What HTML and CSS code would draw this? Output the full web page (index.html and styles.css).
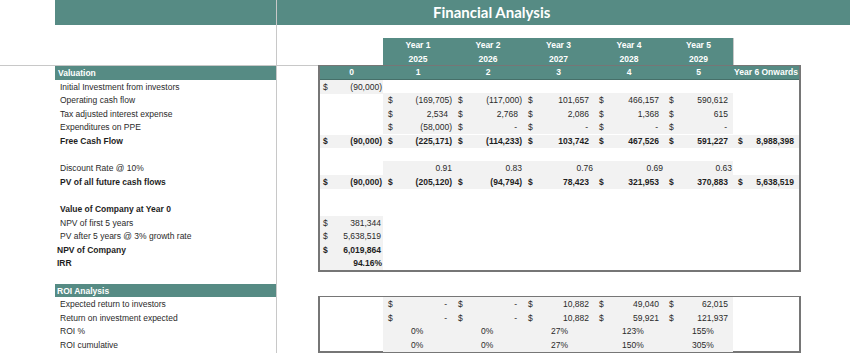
FILE: index.html
```html
<!DOCTYPE html>
<html lang="en">
<head>
<meta charset="utf-8">
<title>Financial Analysis</title>
<link rel="stylesheet" href="styles.css">
</head>
<body>
<div class="sheet">
  <div class="left">
    <div class="title-l"></div>
    <div class="head-l"></div>
    <div class="lrow band">Valuation</div>
    <div class="lrow">Initial Investment from investors</div>
    <div class="lrow">Operating cash flow</div>
    <div class="lrow">Tax adjusted interest expense</div>
    <div class="lrow">Expenditures on PPE</div>
    <div class="lrow b">Free Cash Flow</div>
    <div class="lrow"></div>
    <div class="lrow">Discount Rate @ 10%</div>
    <div class="lrow b">PV of all future cash flows</div>
    <div class="lrow"></div>
    <div class="lrow b">Value of Company at Year 0</div>
    <div class="lrow">NPV of first 5 years</div>
    <div class="lrow">PV after 5 years @ 3% growth rate</div>
    <div class="lrow b out">NPV of Company</div>
    <div class="lrow b out">IRR</div>
    <div class="lrow"></div>
    <div class="lrow band out">ROI Analysis</div>
    <div class="lrow">Expected return to investors</div>
    <div class="lrow">Return on investment expected</div>
    <div class="lrow">ROI %</div>
    <div class="lrow">ROI cumulative</div>
  </div>

  <div class="right">
    <div class="title-r">Financial Analysis</div>
    <div class="head-r">
      <div class="head-gap"></div>
      <div class="years">
        <div class="yr"><span>Year 1</span><span>2025</span></div>
        <div class="yr"><span>Year 2</span><span>2026</span></div>
        <div class="yr"><span>Year 3</span><span>2027</span></div>
        <div class="yr"><span>Year 4</span><span>2028</span></div>
        <div class="yr"><span>Year 5</span><span>2029</span></div>
      </div>
    </div>

    <div class="box">
      <div class="drow hdr">
        <div>0</div><div>1</div><div>2</div><div>3</div><div>4</div><div>5</div><div>Year 6 Onwards</div>
      </div>
      <div class="drow">
        <div class="m g neg"><span>$</span><span>(90,000)</span></div>
        <div></div><div></div><div></div><div></div><div></div><div></div>
      </div>
      <div class="drow">
        <div></div>
        <div class="m g neg"><span>$</span><span>(169,705)</span></div>
        <div class="m g neg"><span>$</span><span>(117,000)</span></div>
        <div class="m g pos"><span>$</span><span>101,657</span></div>
        <div class="m g pos"><span>$</span><span>466,157</span></div>
        <div class="m g pos"><span>$</span><span>590,612</span></div>
        <div></div>
      </div>
      <div class="drow">
        <div></div>
        <div class="m g pos"><span>$</span><span>2,534</span></div>
        <div class="m g pos"><span>$</span><span>2,768</span></div>
        <div class="m g pos"><span>$</span><span>2,086</span></div>
        <div class="m g pos"><span>$</span><span>1,368</span></div>
        <div class="m g pos"><span>$</span><span>615</span></div>
        <div></div>
      </div>
      <div class="drow">
        <div></div>
        <div class="m g neg"><span>$</span><span>(58,000)</span></div>
        <div class="m g dash"><span>$</span><span>-</span></div>
        <div class="m g dash"><span>$</span><span>-</span></div>
        <div class="m g dash"><span>$</span><span>-</span></div>
        <div class="m g dash"><span>$</span><span>-</span></div>
        <div></div>
      </div>
      <div class="drow bold sep">
        <div class="m g neg"><span>$</span><span>(90,000)</span></div>
        <div class="m g neg"><span>$</span><span>(225,171)</span></div>
        <div class="m g neg"><span>$</span><span>(114,233)</span></div>
        <div class="m g pos"><span>$</span><span>103,742</span></div>
        <div class="m g pos"><span>$</span><span>467,526</span></div>
        <div class="m g pos"><span>$</span><span>591,227</span></div>
        <div class="m g pos"><span>$</span><span>8,988,398</span></div>
      </div>
      <div class="drow"></div>
      <div class="drow">
        <div></div>
        <div class="r g">0.91</div>
        <div class="r g">0.83</div>
        <div class="r g">0.76</div>
        <div class="r g">0.69</div>
        <div class="r g">0.63</div>
        <div></div>
      </div>
      <div class="drow bold">
        <div class="m g neg"><span>$</span><span>(90,000)</span></div>
        <div class="m g neg"><span>$</span><span>(205,120)</span></div>
        <div class="m g neg"><span>$</span><span>(94,794)</span></div>
        <div class="m g pos"><span>$</span><span>78,423</span></div>
        <div class="m g pos"><span>$</span><span>321,953</span></div>
        <div class="m g pos"><span>$</span><span>370,883</span></div>
        <div class="m g pos"><span>$</span><span>5,638,519</span></div>
      </div>
      <div class="drow"></div>
      <div class="drow"></div>
      <div class="drow">
        <div class="m g pos"><span>$</span><span>381,344</span></div>
      </div>
      <div class="drow">
        <div class="m g pos"><span>$</span><span>5,638,519</span></div>
      </div>
      <div class="drow bold">
        <div class="m g pos"><span>$</span><span>6,019,864</span></div>
      </div>
      <div class="drow bold">
        <div class="r g">94.16%</div>
      </div>
    </div>

    <div class="spacer"></div>

    <div class="box roi">
      <div class="drow">
        <div></div>
        <div class="m g dash"><span>$</span><span>-</span></div>
        <div class="m g dash"><span>$</span><span>-</span></div>
        <div class="m g pos"><span>$</span><span>10,882</span></div>
        <div class="m g pos"><span>$</span><span>49,040</span></div>
        <div class="m g pos"><span>$</span><span>62,015</span></div>
        <div></div>
      </div>
      <div class="drow">
        <div></div>
        <div class="m g dash"><span>$</span><span>-</span></div>
        <div class="m g dash"><span>$</span><span>-</span></div>
        <div class="m g pos"><span>$</span><span>10,882</span></div>
        <div class="m g pos"><span>$</span><span>59,921</span></div>
        <div class="m g pos"><span>$</span><span>121,937</span></div>
        <div></div>
      </div>
      <div class="drow">
        <div></div>
        <div class="p g">0%</div>
        <div class="p g">0%</div>
        <div class="p g">27%</div>
        <div class="p g">123%</div>
        <div class="p g">155%</div>
        <div></div>
      </div>
      <div class="drow">
        <div></div>
        <div class="p g">0%</div>
        <div class="p g">0%</div>
        <div class="p g">27%</div>
        <div class="p g">150%</div>
        <div class="p g">305%</div>
        <div></div>
      </div>
    </div>
  </div>
</div>
</body>
</html>
```
FILE: styles.css
```css
* {
  box-sizing: border-box;
  margin: 0;
  padding: 0;
}

body {
  margin: 0;
  width: 850px;
  height: 353px;
  overflow: hidden;
  background: #ffffff;
  font-family: "Liberation Sans", Arial, sans-serif;
  font-size: 8.5px;
  color: #2a2a2a;
}

.sheet {
  display: flex;
  height: 353px;
}

/* ---------- left label column ---------- */
.left {
  flex: none;
  width: 277px;
  border-right: 1px solid #c8c8c8;
}

.title-l {
  margin-left: 55px;
  height: 25px;
  background: #568b84;
}

.head-l {
  height: 41px;
  border-bottom: 1px solid #c8c8c8;
}

.lrow {
  height: 13.6px;
  line-height: 14px;
  margin-left: 55px;
  padding-left: 5px;
  white-space: nowrap;
}

.lrow.b {
  font-weight: 700;
  color: #1e1e1e;
}

.lrow.band {
  background: #568b84;
  color: #ffffff;
  font-weight: 700;
  padding-left: 3px;
}

.lrow.out {
  padding-left: 2px;
}

/* ---------- right data area ---------- */
.right {
  flex: 1;
  min-width: 0;
}

.title-r {
  height: 25px;
  background: #568b84;
  color: #ffffff;
  font-family: Lato, "Liberation Sans", sans-serif;
  font-weight: 700;
  font-size: 15px;
  line-height: 25px;
  padding-left: 156px;
}

.head-r {
  display: flex;
  height: 41px;
}

.head-gap {
  width: 41px;
  border-bottom: 1px solid #c8c8c8;
}

.years {
  display: flex;
  margin-left: 65px;
  margin-top: 13px;
  height: 27px;
  background: #568b84;
  color: #ffffff;
  font-weight: 700;
  border-right: 1px solid #c8c8c8;
}

.yr {
  width: 70px;
  display: flex;
  flex-direction: column;
  align-items: center;
}

.yr:nth-child(3) {
  width: 71px;
}

.yr:nth-child(5) {
  width: 69px;
}

.yr span {
  height: 13.5px;
  line-height: 14px;
}

.box {
  margin-left: 41px;
  margin-top: -1px;
  width: 483px;
  border: 2px solid #767676;
  border-top-width: 1px;
}

.spacer {
  height: 25px;
}

.drow {
  display: grid;
  grid-template-columns: 63px 70px 70px 71px 70px 69px 66px;
  height: 13.6px;
  line-height: 14px;
  white-space: nowrap;
}

.drow.hdr {
  background: #568b84;
  color: #ffffff;
  font-weight: 700;
  text-align: center;
  border-bottom: 1px solid #466f69;
  line-height: 13px;
}

.drow.bold {
  font-weight: 700;
  color: #1e1e1e;
}

.drow.sep > div {
  border-top: 1px solid #ffffff;
  line-height: 13px;
}

.g {
  background: #f2f2f2;
}

.m {
  display: flex;
  justify-content: space-between;
  padding-left: 5px;
}

.drow > .m:first-child {
  padding-left: 3px;
}

.neg {
  padding-right: 1px;
}

.pos {
  padding-right: 5px;
}

.dash {
  padding-right: 6px;
}

.drow > .pos:first-child {
  padding-right: 2px;
}

.r {
  text-align: right;
  padding-right: 1px;
}

.p {
  padding-left: 28px;
}
```
